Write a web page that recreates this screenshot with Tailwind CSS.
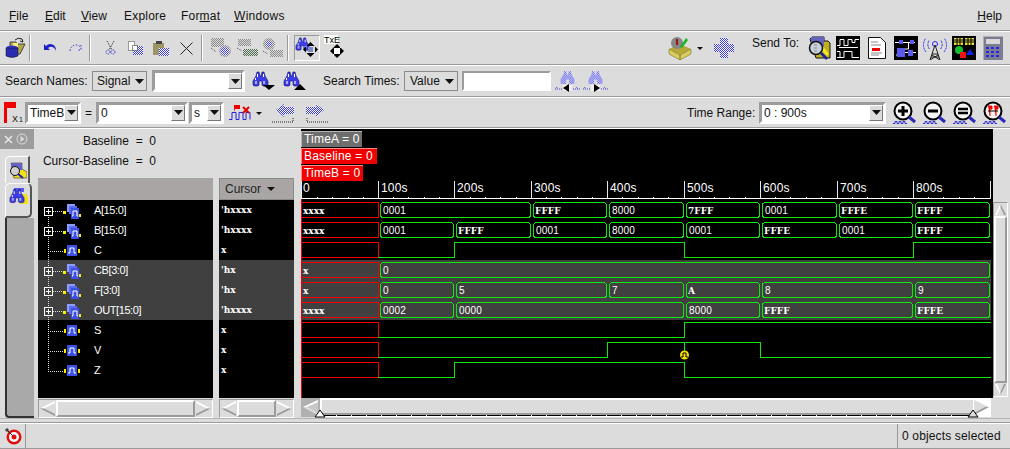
<!DOCTYPE html>
<html lang="en">
<head>
  <meta charset="UTF-8" />
  <title>Waveform Viewer</title>
  <script src="https://cdn.jsdelivr.net/npm/@tailwindcss/browser@4"></script>
</head>
<body class="bg-[#dcdcdc]">
  <!-- shared icon parts -->
  <svg class="absolute w-0 h-0">
    <defs>
      <pattern id="dblue" width="2" height="2" patternUnits="userSpaceOnUse"><rect width="2" height="2" fill="#fff"/><rect width="1" height="1" fill="#3c3ce0"/><rect x="1" y="1" width="1" height="1" fill="#3c3ce0"/></pattern>
      <pattern id="dgray" width="2" height="2" patternUnits="userSpaceOnUse"><rect width="1" height="1" fill="#8a8a8a"/><rect x="1" y="1" width="1" height="1" fill="#8a8a8a"/></pattern>
      <pattern id="dgreen" width="2" height="2" patternUnits="userSpaceOnUse"><rect width="1" height="1" fill="#4c6c4c"/><rect x="1" y="1" width="1" height="1" fill="#4c6c4c"/></pattern>
      <symbol id="binoc" viewBox="0 0 17 16">
        <path d="M5 1h2l1 4h1l1-4h2l1 4 3 5v4l-1 1h-4l-1-1v-4H7v4l-1 1H2l-1-1v-4l3-5z" fill="#3c3ce8" stroke="#101060" stroke-width=".6"/>
        <path d="M3 10h2v3H3zM11 10h2v3h-2z" fill="#a8a8ff"/>
        <path d="M5 3h1v3H5zM11 3h1v3h-1zM3 7h1v2H3z" fill="#fff"/>
      </symbol>
      <symbol id="binocd" viewBox="0 0 17 16">
        <path d="M5 1h2l1 4h1l1-4h2l1 4 3 5v4l-1 1h-4l-1-1v-4H7v4l-1 1H2l-1-1v-4l3-5z" fill="url(#dblue)"/>
      </symbol>
      <symbol id="sig" viewBox="0 0 16 12">
        <path d="M0 4h2v4H0zM14 4h2v4h-2z" fill="#ffee00"/>
        <rect x="3" y="0" width="10" height="11" fill="#3c50e8"/>
        <path d="M4 8h2V3h4v5h2" fill="none" stroke="#fff"/>
      </symbol>
      <symbol id="group" viewBox="0 0 19 15">
        <rect x="4" y="0" width="8" height="8" fill="#8c9cff"/>
        <rect x="6" y="2" width="8" height="8" fill="#5a6cf0"/>
        <path d="M0 7h3v3H0zM16 10h2v3h-2z" fill="#ffee00"/>
        <rect x="8" y="4" width="8" height="11" fill="#3c50e8"/>
        <path d="M9 12h1V7h4v5h1" fill="none" stroke="#fff"/>
      </symbol>
      <symbol id="lens" viewBox="0 0 24 24">
        <circle cx="10" cy="10" r="8.500" fill="#f4f4f4" stroke="#000" stroke-width="2"/>
        <path d="M16 16l6 5" stroke="#2a2ab8" stroke-width="3"/>
        <path d="M0 22.500h2v-2h2v2h2v-2h2v2h2v-2h2v2h2" fill="none" stroke="#3030e0"/>
      </symbol>
    </defs>
  </svg>

  <div class="w-[1010px] h-[449px] overflow-hidden flex flex-col bg-[#dcdcdc] text-[12px] leading-none text-[#111] font-['Liberation_Sans',sans-serif]">

    <!-- Menu bar -->
    <div class="h-[30px] shrink-0 flex items-center pt-px">
      <span class="ml-[9px] w-[36px]"><u>F</u>ile</span>
      <span class="w-[36px]"><u>E</u>dit</span>
      <span class="w-[43px]"><u>V</u>iew</span>
      <span class="w-[57px] tracking-[.2px]">Explore</span>
      <span class="w-[53px] tracking-[.2px]">For<u>m</u>at</span>
      <span class="tracking-[.3px]"><u>W</u>indows</span>
      <span class="ml-auto mr-[8px]"><u>H</u>elp</span>
    </div>
    <div class="h-px shrink-0 bg-[#9a9a9a]"></div><div class="h-px shrink-0 bg-white"></div>

    <!-- Main toolbar -->
    <div class="h-[32px] shrink-0 flex items-center">
      <svg class="ml-[5px] shrink-0" width="21" height="22" viewBox="0 0 21 22"><path d="M5 5h6l1 2h8l-5 10H5z" fill="#b4a848" stroke="#444"/><path d="M10 3q3-3 7-1l1 3-3-1" fill="none" stroke="#222"/><path d="M8 6h5v4H8z" fill="#f8f080"/><ellipse cx="7" cy="11" rx="6" ry="2.500" fill="#3434c8"/><path d="M1 11v8q6 3 12 0v-8z" fill="#2c2cb0" stroke="#111" stroke-width=".5"/></svg>
      <div class="ml-[3px] w-[2px] h-[26px] bg-[#9a9a9a] border-r border-white"></div>
      <svg class="ml-[12px] shrink-0" width="14" height="10" viewBox="0 0 14 10"><path d="M1 1v6h6L5 5q4-3 7 1l1 2q0-7-6-7-2 0-4 2L1 1z" fill="#2020c8"/></svg>
      <svg class="ml-[12px] shrink-0" width="14" height="10" viewBox="0 0 14 10"><path d="M1 8q1-6 6-6 3 0 5 3M12 2v5H8" fill="none" stroke="#3030d0" stroke-dasharray="1.500 1.500"/></svg>
      <div class="ml-[6px] w-[2px] h-[26px] bg-[#9a9a9a] border-r border-white"></div>
      <svg class="ml-[14px] shrink-0" width="11" height="14" viewBox="0 0 11 14"><path d="M2 0l5 9M9 0L4 9" stroke="#222" stroke-dasharray="1 1"/><circle cx="3" cy="11" r="2" fill="none" stroke="#2020c8" stroke-dasharray="1 1"/><circle cx="8" cy="11" r="2" fill="none" stroke="#2020c8" stroke-dasharray="1 1"/></svg>
      <svg class="ml-[12px] shrink-0" width="15" height="14" viewBox="0 0 15 14"><path d="M.5.500h6v9h-6z" fill="#fff" stroke="#444" stroke-dasharray="1 1"/><rect x="5" y="5" width="10" height="9" fill="url(#dblue)"/><path d="M4.500 4.500h5v5h-5z" fill="#fff" stroke="#222" stroke-dasharray="1 1"/></svg>
      <svg class="ml-[10px] shrink-0" width="16" height="15" viewBox="0 0 16 15"><rect x="0" y="2" width="11" height="12" fill="#b0a040"/><rect width="11" height="12" y="2" fill="url(#dgray)"/><rect x="3" width="6" height="3" fill="#444"/><rect x="6" y="7" width="10" height="8" fill="url(#dblue)"/></svg>
      <svg class="ml-[11px] shrink-0" width="13" height="13" viewBox="0 0 13 13"><path d="M.5.500l12 12M12.500.500l-12 12" stroke="#222"/></svg>
      <div class="ml-[8px] w-[2px] h-[26px] bg-[#9a9a9a] border-r border-white"></div>
      <svg class="ml-[7px] shrink-0" width="22" height="20" viewBox="0 0 22 20"><rect x="1" width="13" height="9" fill="url(#dgray)"/><path d="M1 10l5 4" stroke="#444" stroke-dasharray="1 1"/><circle cx="15" cy="13" r="6" fill="url(#dgray)"/><circle cx="15" cy="13" r="4" fill="url(#dblue)"/></svg>
      <svg class="ml-[5px] shrink-0" width="22" height="20" viewBox="0 0 22 20"><rect x="1" y="1" width="13" height="7" fill="url(#dgray)"/><path d="M0 10l5 3" stroke="#444" stroke-dasharray="1 1"/><rect x="6" y="11" width="15" height="7" fill="url(#dgreen)"/></svg>
      <svg class="ml-[3px] shrink-0" width="22" height="20" viewBox="0 0 22 20"><circle cx="7" cy="6" r="6" fill="url(#dgray)"/><circle cx="7" cy="6" r="3" fill="url(#dblue)"/><path d="M1 13l5 3" stroke="#444" stroke-dasharray="1 1"/><rect x="8" y="12" width="13" height="7" fill="url(#dgray)"/></svg>
      <div class="ml-[3px] w-[2px] h-[26px] bg-[#9a9a9a] border-r border-white"></div>
      <div class="ml-[5px] w-[26px] h-[26px] shrink-0 border border-[#9a9a9a] border-r-white border-b-white flex items-center justify-center">
        <svg width="24" height="22" viewBox="0 0 24 22"><use href="#binoc" x="0" y="0" width="15" height="14"/><rect x="13" y="10" width="5" height="5" fill="#8088c0"/><path d="M15.500 5l4 4h-8zM15.500 20l4-4h-8zM8 12.500l3-3v6zM23 12.500l-3-3v6z" fill="#000"/></svg>
      </div>
      <svg class="ml-[4px] shrink-0" width="24" height="26" viewBox="0 0 24 26"><rect width="14" height="9" fill="#fff"/><text x="0" y="8" class="text-[9px] font-['Liberation_Sans',sans-serif]" fill="#000">TxE</text><circle cx="13" cy="16" r="5" fill="#fff"/><path d="M13 9l4 4H9zM13 23l4-4H9zM6 16l4-4v8zM20 16l-4-4v8z" fill="#000"/></svg>
      <svg class="ml-[320px] shrink-0" width="24" height="24" viewBox="0 0 24 24"><path d="M1 13l11-5 11 5-11 6z" fill="#b8a838"/><path d="M1 13v5l11 6v-5zM23 13v5l-11 6v-5z" fill="#d8cc5c" stroke="#6a6020" stroke-width=".5"/><circle cx="9" cy="7" r="6" fill="#888"/><path d="M9 3v6" stroke="#a01010" stroke-width="2"/><path d="M12 11l6-9 2 2-6 8z" fill="#18b818"/></svg>
      <svg class="ml-[5px] shrink-0" width="6" height="3" viewBox="0 0 6 3"><path d="M0 0h6L3 3z" fill="#111"/></svg>
      <svg class="ml-[11px] shrink-0" width="20" height="20" viewBox="0 0 20 20"><path d="M6 0h8v6h6v8h-6v6H6v-6H0V6h6z" fill="url(#dblue)"/></svg>
      <span class="ml-[18px] w-[50px] self-start mt-[5px] whitespace-nowrap">Send To:</span>
      <svg class="ml-[5px] shrink-0" width="24" height="24" viewBox="0 0 24 24"><path d="M3 3l2-2h12v4h4l2 2v15H9z" fill="#c0b020" stroke="#111"/><rect x="4" y="1" width="13" height="10" fill="#6464c0"/><path d="M12 12l8 8 2-2-7-9z" fill="#f0e820"/><circle cx="9" cy="12" r="6.500" fill="#c8d0d8" stroke="#111" stroke-width="1.500"/><path d="M7 9h3M7 12h3M7 15h3" stroke="#889"/><path d="M14 17l6 6" stroke="#2020a0" stroke-width="2.500"/></svg>
      <svg class="ml-[5px] shrink-0" width="24" height="24" viewBox="0 0 24 24"><rect width="24" height="24" fill="#000"/><path d="M1 9.500h3v-6h4v6h4v-6h4v3h3v-3h4M3 11.500h19M1 21.500h7v-6h8v6h7M1 15.500h3v6" fill="none" stroke="#fff"/></svg>
      <svg class="ml-[8px] shrink-0" width="18" height="24" viewBox="0 0 18 24"><path d="M.5 1.500h12l5 5v16H.5z" fill="#fff" stroke="#111"/><path d="M3 6h7M3 9h10M3 17h11M3 19h8" stroke="#888"/><rect x="4" y="12" width="8" height="3" fill="#f00000"/></svg>
      <svg class="ml-[8px] shrink-0" width="24" height="24" viewBox="0 0 24 24"><rect width="24" height="24" fill="#000"/><path d="M1 6.500h20M14.500 6v7h-4M6 16.500h16M2 19h2" stroke="#fff" fill="none"/><rect x="5" y="4" width="4" height="4" fill="#5a5af0"/><rect x="16" y="4" width="4" height="4" fill="#5a5af0"/><rect x="3" y="12" width="8" height="9" fill="#5a5af0"/><rect x="14" y="14" width="5" height="6" fill="#5a5af0"/></svg>
      <svg class="ml-[5px] shrink-0" width="24" height="24" viewBox="0 0 24 24"><path d="M3 16a11 11 0 0 1 0-14M21 16a11 11 0 0 0 0-14M6.500 13a7 7 0 0 1 0-9M17.500 13a7 7 0 0 0 0-9" fill="none" stroke="#2424f0" stroke-dasharray="2 1"/><circle cx="12" cy="8" r="2.500" fill="none" stroke="#2424f0"/><path d="M12 9L7 24M12 9l5 15M9 18h6M8 21h8M7 24l8-5M17 24l-8-5" stroke="#222" fill="none"/></svg>
      <svg class="ml-[5px] shrink-0" width="24" height="24" viewBox="0 0 24 24"><rect width="24" height="24" fill="#000"/><rect x="2" y="2" width="9" height="7" fill="#e8e040"/><rect x="13" y="2" width="9" height="7" fill="#e8e040"/><path d="M2 4h20M2 6h20M5 2v7M8 2v7M16 2v7M19 2v7" stroke="#000"/><circle cx="7" cy="14" r="4" fill="#10c030"/><rect x="8" y="16" width="6" height="6" fill="#f01010"/><path d="M18 13l4 6h-8z" fill="#1020f0"/></svg>
      <svg class="ml-[7px] shrink-0" width="20" height="24" viewBox="0 0 20 24"><rect width="20" height="24" rx="1" fill="#7c7c90"/><path d="M0 0h20v1H1v23H0z" fill="#b0b0b8"/><rect x="3" y="3" width="14" height="5" fill="#d8d8d8"/><path d="M3 11h3v2H3zM8 11h3v2H8zM13 11h3v2h-3zM3 15h3v2H3zM8 15h3v2H8zM13 15h3v2h-3zM3 19h3v2H3zM8 19h3v2H8zM13 19h3v2h-3z" fill="#2828e8"/></svg>
    </div>
    <div class="h-px shrink-0 bg-[#9a9a9a]"></div><div class="h-px shrink-0 bg-white"></div>

    <!-- Search toolbar -->
    <div class="h-[30px] shrink-0 flex items-center">
      <span class="ml-[5px] w-[83px] whitespace-nowrap">Search Names:</span>
      <div class="ml-[4px] w-[55px] h-[20px] shrink-0 border border-[#8a8a8a] flex items-center pl-[4px] gap-[5px]">Signal<svg width="9" height="5"><path d="M0 0h9L4.500 5z" fill="#111"/></svg></div>
      <div class="ml-[5px] w-[93px] h-[22px] shrink-0 flex border-[3px] border-[#9c9c9c] border-r-white border-b-white">
        <div class="flex-1 bg-white"></div>
        <div class="w-[14px] flex items-center justify-center border border-white border-r-[#777] border-b-[#777]"><svg width="9" height="5"><path d="M0 0h9L4.500 5z" fill="#111"/></svg></div>
      </div>
      <svg class="ml-[7px] shrink-0" width="23" height="20" viewBox="0 0 23 20"><use href="#binoc" width="17" height="16"/><path d="M11 14h12l-6 5z" fill="#000"/></svg>
      <svg class="ml-[8px] shrink-0" width="23" height="20" viewBox="0 0 23 20"><use href="#binoc" width="17" height="16"/><path d="M11 19h12l-6-6z" fill="#000"/></svg>
      <span class="ml-[17px] w-[78px] whitespace-nowrap">Search Times:</span>
      <div class="ml-[3px] w-[54px] h-[20px] shrink-0 border border-[#8a8a8a] flex items-center pl-[5px] gap-[5px]">Value<svg width="9" height="5"><path d="M0 0h9L4.500 5z" fill="#111"/></svg></div>
      <div class="ml-[4px] w-[89px] h-[20px] shrink-0 bg-white border-[2px] border-[#9c9c9c] border-r-white border-b-white"></div>
      <svg class="ml-[4px] shrink-0" width="25" height="22" viewBox="0 0 25 22"><use href="#binocd" x="4" width="17" height="15"/><path d="M0 19h7M18 19h7M2 17l-1 2M21 17l2 2" stroke="#3c3ce0" stroke-dasharray="1 1"/><path d="M8 15h9v6H8z" fill="#eee"/><path d="M14 14v8l-6-4z" fill="#000"/></svg>
      <svg class="ml-[3px] shrink-0" width="25" height="22" viewBox="0 0 25 22"><use href="#binocd" x="4" width="17" height="15"/><path d="M0 19h7M18 19h7M2 17l-1 2M21 17l2 2" stroke="#3c3ce0" stroke-dasharray="1 1"/><path d="M8 15h9v6H8z" fill="#eee"/><path d="M11 14v8l6-4z" fill="#000"/></svg>
    </div>
    <div class="h-px shrink-0 bg-[#9a9a9a]"></div><div class="h-px shrink-0 bg-white"></div>

    <!-- Time toolbar -->
    <div class="h-[29px] shrink-0 flex items-center">
      <svg class="ml-[4px] shrink-0" width="20" height="21" viewBox="0 0 20 21"><path d="M0 0h12v6H3v15H0z" fill="#f00000"/><text x="8" y="20" class="text-[9px] font-['Liberation_Sans',sans-serif]" fill="#111">X</text><text x="15" y="20" class="text-[7px] font-['Liberation_Sans',sans-serif]" fill="#111">1</text></svg>
      <div class="ml-px w-[56px] h-[22px] shrink-0 flex border-[3px] border-[#9c9c9c] border-r-white border-b-white">
        <div class="flex-1 bg-white flex items-center pl-[2px]">TimeB</div>
        <div class="w-[14px] flex items-center justify-center border border-white border-r-[#777] border-b-[#777]"><svg width="9" height="5"><path d="M0 0h9L4.500 5z" fill="#111"/></svg></div>
      </div>
      <span class="ml-[4px] w-[6px]">=</span>
      <div class="ml-[5px] w-[92px] h-[22px] shrink-0 flex border-[3px] border-[#9c9c9c] border-r-white border-b-white">
        <div class="flex-1 bg-white flex items-center pl-[2px]">0</div>
        <div class="w-[14px] flex items-center justify-center border border-white border-r-[#777] border-b-[#777]"><svg width="9" height="5"><path d="M0 0h9L4.500 5z" fill="#111"/></svg></div>
      </div>
      <div class="ml-px w-[35px] h-[22px] shrink-0 flex border-[3px] border-[#9c9c9c] border-r-white border-b-white">
        <div class="flex-1 bg-white flex items-center pl-[2px]">s</div>
        <div class="w-[14px] flex items-center justify-center border border-white border-r-[#777] border-b-[#777]"><svg width="9" height="5"><path d="M0 0h9L4.500 5z" fill="#111"/></svg></div>
      </div>
      <svg class="ml-[5px] shrink-0" width="33" height="18" viewBox="0 0 33 18"><path d="M0 15.500h3v-7h4v7h3v-7h4v7h3v-7h4v7" fill="none" stroke="#2020e0"/><path d="M5 8V1h6v4H6" fill="#f00000"/><path d="M14 3l6 6M20 3l-6 6" stroke="#e00000" stroke-width="2"/><path d="M27 8h6l-3 3z" fill="#111"/></svg>
      <svg class="ml-[10px] shrink-0" width="24" height="20" viewBox="0 0 24 20"><path d="M4 7l8-6v3h10v7H12v3z" fill="url(#dblue)"/><path d="M0 19h21V14" fill="none" stroke="#222" stroke-dasharray="1 1"/></svg>
      <svg class="ml-[8px] shrink-0" width="24" height="20" viewBox="0 0 24 20"><path d="M20 7l-8-6v3H2v7h10v3z" fill="url(#dblue)"/><path d="M24 19H3V14" fill="none" stroke="#222" stroke-dasharray="1 1"/></svg>
      <span class="ml-[359px] w-[68px] whitespace-nowrap">Time Range:</span>
      <div class="ml-[4px] w-[127px] h-[22px] shrink-0 flex border-[3px] border-[#9c9c9c] border-r-white border-b-white">
        <div class="flex-1 bg-white flex items-center pl-[2px] whitespace-pre">0 : 900s</div>
        <div class="w-[14px] flex items-center justify-center border border-white border-r-[#777] border-b-[#777]"><svg width="9" height="5"><path d="M0 0h9L4.500 5z" fill="#111"/></svg></div>
      </div>
      <svg class="ml-[7px] shrink-0" width="24" height="24"><use href="#lens" width="24" height="24"/><path d="M5 10h10M10 5v10" stroke="#000" stroke-width="3"/></svg>
      <svg class="ml-[6px] shrink-0" width="24" height="24"><use href="#lens" width="24" height="24"/><path d="M5 10h10" stroke="#000" stroke-width="3"/></svg>
      <svg class="ml-[6px] shrink-0" width="24" height="24"><use href="#lens" width="24" height="24"/><path d="M5 8h10M5 12h10" stroke="#000" stroke-width="2.500"/></svg>
      <svg class="ml-[6px] shrink-0" width="24" height="24"><use href="#lens" width="24" height="24"/><path d="M5 5h4v3H7v7M11 5h4v3h-2v7" fill="#f00000" stroke="#f00000"/><path d="M5 10h10" stroke="#000"/></svg>
    </div>
    <div class="h-px shrink-0 bg-[#9a9a9a]"></div><div class="h-px shrink-0 bg-white"></div>

    <!-- Work area -->
    <div class="h-[289px] shrink-0 flex">

      <!-- Tab strip -->
      <div class="w-[34px] shrink-0 flex flex-col">
        <div class="h-[20px] shrink-0 bg-[#9c9c9c] flex items-center pl-[4px] gap-[3px]">
          <svg width="9" height="9"><path d="M1 1l7 7M8 1L1 8" stroke="#e8e8e8" stroke-width="1.500"/></svg>
          <svg width="12" height="12"><circle cx="6" cy="6" r="5" fill="none" stroke="#dcdcdc"/><path d="M4.500 3l4 3-4 3z" fill="#dcdcdc"/></svg>
        </div>
        <div class="h-[7px] shrink-0"></div>
        <div class="ml-[5px] w-[25px] h-[27px] shrink-0 rounded-tl-[5px] border-l border-t border-white bg-[#dcdcdc] border-r-2 border-r-[#555] flex items-center justify-center">
          <svg width="19" height="17" viewBox="0 0 19 17"><path d="M3 1h11v6l5 3v6H6z" fill="#f0e020" stroke="#111" stroke-width=".5"/><rect x="3" y="1" width="11" height="7" fill="#6464c0"/><circle cx="7" cy="9" r="4.500" fill="#d0d0d0" stroke="#111"/><path d="M10 12l5 4" stroke="#2020a0" stroke-width="2"/></svg>
        </div>
        <div class="ml-[5px] w-[27px] h-[35px] shrink-0 rounded-t-[5px] rounded-br-[5px] border-l border-t border-white bg-[#dcdcdc] border-r-2 border-r-[#555] border-b-2 border-b-[#555] flex pt-[4px] justify-center">
          <svg width="19" height="17" viewBox="0 0 19 17"><path d="M13 6h5l1 4v6h-8z" fill="#f0e020"/><rect x="5" width="10" height="4" fill="#5a5af0"/><use href="#binoc" width="16" height="16"/></svg>
        </div>
        <div class="flex-1 ml-[5px] border-l-2 border-[#333] border-b-2 rounded-bl-[4px] bg-[#a9a9a9]"></div>
      </div>

      <!-- Signal names and cursor values -->
      <div class="w-[267px] shrink-0 flex flex-col">
        <div class="h-[49px] shrink-0 w-[122px] flex flex-col items-end pt-[6px] gap-[8px]">
          <span class="h-[12px] whitespace-pre">Baseline  =  0</span>
          <span class="h-[12px] whitespace-pre">Cursor-Baseline  =  0</span>
        </div>
        <div class="flex-1 flex">
          <div class="ml-[4px] w-[175px] shrink-0 flex flex-col">
            <div class="h-[22px] bg-[#a9a5a5]"></div>
            <div class="h-[198px] bg-black text-white text-[11px] tracking-[-.4px]">
              <div class="h-[20px] flex items-center pt-px"><svg class="shrink-0" width="56" height="20"><path d="M10.500 10v10M15 10.500h10" stroke="#ddd" stroke-dasharray="1 1"/><rect x="6.500" y="6.500" width="8" height="8" fill="#000" stroke="#fff"/><path d="M8 10.500h5M10.500 8v5" stroke="#fff"/><use href="#group" x="25" y="3" width="19" height="15"/></svg>A[15:0]</div>
              <div class="h-[20px] flex items-center pt-px"><svg class="shrink-0" width="56" height="20"><path d="M10.500 0v20M15 10.500h10" stroke="#ddd" stroke-dasharray="1 1"/><rect x="6.500" y="6.500" width="8" height="8" fill="#000" stroke="#fff"/><path d="M8 10.500h5M10.500 8v5" stroke="#fff"/><use href="#group" x="25" y="3" width="19" height="15"/></svg>B[15:0]</div>
              <div class="h-[20px] flex items-center pt-px"><svg class="shrink-0" width="56" height="20"><path d="M10.500 0v20M10 10.500h16" stroke="#ddd" stroke-dasharray="1 1"/><use href="#sig" x="26" y="4" width="16" height="12"/></svg>C</div>
              <div class="h-[20px] flex items-center pt-px bg-[#404040]"><svg class="shrink-0" width="56" height="20"><path d="M10.500 0v20M15 10.500h10" stroke="#ddd" stroke-dasharray="1 1"/><rect x="6.500" y="6.500" width="8" height="8" fill="#404040" stroke="#fff"/><path d="M8 10.500h5M10.500 8v5" stroke="#fff"/><use href="#group" x="25" y="3" width="19" height="15"/></svg>CB[3:0]</div>
              <div class="h-[20px] flex items-center pt-px bg-[#404040]"><svg class="shrink-0" width="56" height="20"><path d="M10.500 0v20M15 10.500h10" stroke="#ddd" stroke-dasharray="1 1"/><rect x="6.500" y="6.500" width="8" height="8" fill="#404040" stroke="#fff"/><path d="M8 10.500h5M10.500 8v5" stroke="#fff"/><use href="#group" x="25" y="3" width="19" height="15"/></svg>F[3:0]</div>
              <div class="h-[20px] flex items-center pt-px bg-[#404040]"><svg class="shrink-0" width="56" height="20"><path d="M10.500 0v20M15 10.500h10" stroke="#ddd" stroke-dasharray="1 1"/><rect x="6.500" y="6.500" width="8" height="8" fill="#404040" stroke="#fff"/><path d="M8 10.500h5M10.500 8v5" stroke="#fff"/><use href="#group" x="25" y="3" width="19" height="15"/></svg>OUT[15:0]</div>
              <div class="h-[20px] flex items-center pt-px"><svg class="shrink-0" width="56" height="20"><path d="M10.500 0v20M10 10.500h16" stroke="#ddd" stroke-dasharray="1 1"/><use href="#sig" x="26" y="4" width="16" height="12"/></svg>S</div>
              <div class="h-[20px] flex items-center pt-px"><svg class="shrink-0" width="56" height="20"><path d="M10.500 0v20M10 10.500h16" stroke="#ddd" stroke-dasharray="1 1"/><use href="#sig" x="26" y="4" width="16" height="12"/></svg>V</div>
              <div class="h-[20px] flex items-center pt-px"><svg class="shrink-0" width="56" height="20"><path d="M10.500 0v10.500M10 10.500h16" stroke="#ddd" stroke-dasharray="1 1"/><use href="#sig" x="26" y="4" width="16" height="12"/></svg>Z</div>
            </div>
            <div class="h-[19px] flex border border-[#9a9a9a] border-r-white border-b-white mt-px">
              <svg class="shrink-0" width="17" height="17" viewBox="0 0 17 17"><path d="M1 8.500L16 1v15z" fill="#dcdcdc"/><path d="M1 8.500L16 1v2L5 8.500z" fill="#fff"/><path d="M1 8.500L16 16v-2L5 8.500z" fill="#9a9a9a"/></svg>
              <div class="flex-1 border-2 border-t-white border-l-white border-r-[#9a9a9a] border-b-[#9a9a9a]"></div>
              <svg class="shrink-0" width="17" height="17" viewBox="0 0 17 17"><path d="M16 8.500L1 1v15z" fill="#dcdcdc"/><path d="M16 8.500L1 1v2l11 5.500z" fill="#fff"/><path d="M16 8.500L1 16v-2l11-5.500z" fill="#9a9a9a"/></svg>
            </div>
          </div>
          <div class="ml-[6px] w-[75px] shrink-0 flex flex-col">
            <div class="h-[22px] bg-[#a9a5a5] border border-[#8a8a8a] flex items-center pl-[5px] gap-[6px] text-[#222]">Cursor<svg width="8" height="4"><path d="M0 0h8L4 4z" fill="#111"/></svg></div>
            <div class="h-[198px] bg-black text-white font-['DejaVu_Serif',serif] font-bold text-[9px]">
              <div class="h-[20px] flex items-center pl-[2px]">'hxxxx</div>
              <div class="h-[20px] flex items-center pl-[2px]">'hxxxx</div>
              <div class="h-[20px] flex items-center pl-[2px]">x</div>
              <div class="h-[20px] flex items-center pl-[2px] bg-[#404040]">'hx</div>
              <div class="h-[20px] flex items-center pl-[2px] bg-[#404040]">'hx</div>
              <div class="h-[20px] flex items-center pl-[2px] bg-[#404040]">'hxxxx</div>
              <div class="h-[20px] flex items-center pl-[2px]">x</div>
              <div class="h-[20px] flex items-center pl-[2px]">x</div>
              <div class="h-[20px] flex items-center pl-[2px]">x</div>
            </div>
            <div class="h-[19px] flex border border-[#9a9a9a] border-r-white border-b-white mt-px">
              <svg class="shrink-0" width="17" height="17" viewBox="0 0 17 17"><path d="M1 8.500L16 1v15z" fill="#dcdcdc"/><path d="M1 8.500L16 1v2L5 8.500z" fill="#fff"/><path d="M1 8.500L16 16v-2L5 8.500z" fill="#9a9a9a"/></svg>
              <div class="flex-1 border-2 border-t-white border-l-white border-r-[#9a9a9a] border-b-[#9a9a9a]"></div>
              <svg class="shrink-0" width="17" height="17" viewBox="0 0 17 17"><path d="M16 8.500L1 1v15z" fill="#dcdcdc"/><path d="M16 8.500L1 1v2l11 5.500z" fill="#fff"/><path d="M16 8.500L1 16v-2l11-5.500z" fill="#9a9a9a"/></svg>
            </div>
          </div>
        </div>
      </div>

      <!-- Waveforms -->
      <div class="w-[692px] shrink-0 flex flex-col">
        <svg class="block shrink-0 bg-black" width="692" height="269" viewBox="301 129 692 269" shape-rendering="crispEdges">
          <!-- grey bands -->
          <rect x="301" y="260" width="690" height="60" fill="#404040"/>
          <!-- time flags -->
          <rect x="301" y="131" width="61" height="16" fill="#6e6e6e"/><path d="M301.500 147V131.500H362" stroke="#b4b4b4" fill="none"/>
          <rect x="301" y="148" width="76" height="16" fill="#f00000"/><path d="M301.500 164V148.500H377" stroke="#ff8888" fill="none"/>
          <rect x="301" y="165" width="62" height="16" fill="#f00000"/><path d="M301.500 181V165.500H363" stroke="#ff8888" fill="none"/>
          <g fill="#fff" class="text-[12px] tracking-[.2px] font-['Liberation_Sans',sans-serif]" shape-rendering="auto">
            <text x="304" y="143">TimeA = 0</text>
            <text x="304" y="160">Baseline = 0</text>
            <text x="304" y="177">TimeB = 0</text>
            <!-- ruler labels -->
            <text x="303" y="192">0</text>
            <text x="381" y="192">100s</text>
            <text x="457" y="192">200s</text>
            <text x="534" y="192">300s</text>
            <text x="610" y="192">400s</text>
            <text x="687" y="192">500s</text>
            <text x="763" y="192">600s</text>
            <text x="840" y="192">700s</text>
            <text x="916" y="192">800s</text>
          </g>
          <!-- ruler -->
          <path d="M301 198.500H991" stroke="#fff"/>
          <path d="M301.500 181V199M378.500 181V199M454.500 181V199M531.500 181V199M607.500 181V199M684.500 181V199M760.500 181V199M837.500 181V199M913.500 181V199M990.500 181V199" stroke="#e8e8e8"/>
          <path d="M317.500 196.500V198M332.500 196.500V198M348.500 196.500V198M363.500 196.500V198M393.500 196.500V198M408.500 196.500V198M424.500 196.500V198M439.500 196.500V198M470.500 196.500V198M485.500 196.500V198M500.500 196.500V198M516.500 196.500V198M546.500 196.500V198M561.500 196.500V198M577.500 196.500V198M592.500 196.500V198M622.500 196.500V198M638.500 196.500V198M653.500 196.500V198M668.500 196.500V198M699.500 196.500V198M714.500 196.500V198M729.500 196.500V198M745.500 196.500V198M775.500 196.500V198M790.500 196.500V198M806.500 196.500V198M821.500 196.500V198M852.500 196.500V198M867.500 196.500V198M882.500 196.500V198M898.500 196.500V198M928.500 196.500V198M943.500 196.500V198M959.500 196.500V198M974.500 196.500V198" stroke="#fff" stroke-width="1"/>
          <!-- red undefined part -->
          <path d="M301.500 199V398" stroke="#f00000"/>
          <g fill="none" stroke="#f00000">
            <rect x="301.500" y="202.500" width="77" height="15"/>
            <rect x="301.500" y="222.500" width="77" height="15"/>
            <rect x="301.500" y="242.500" width="77" height="15"/>
            <rect x="301.500" y="262.500" width="77" height="15"/>
            <rect x="301.500" y="282.500" width="77" height="15"/>
            <rect x="301.500" y="302.500" width="77" height="15"/>
            <rect x="301.500" y="322.500" width="77" height="15"/>
            <rect x="301.500" y="342.500" width="77" height="15"/>
            <rect x="301.500" y="362.500" width="77" height="15"/>
          </g>
          <!-- bus values -->
          <g fill="none" stroke="#10e810">
            <rect x="380.500" y="202.500" width="150" height="15" rx="3"/>
            <rect x="533.500" y="202.500" width="73" height="15" rx="3"/>
            <rect x="609.500" y="202.500" width="74" height="15" rx="3"/>
            <rect x="686.500" y="202.500" width="73" height="15" rx="3"/>
            <rect x="762.500" y="202.500" width="74" height="15" rx="3"/>
            <rect x="839.500" y="202.500" width="73" height="15" rx="3"/>
            <rect x="915.500" y="202.500" width="74" height="15" rx="3"/>

            <rect x="380.500" y="222.500" width="73" height="15" rx="3"/>
            <rect x="456.500" y="222.500" width="74" height="15" rx="3"/>
            <rect x="533.500" y="222.500" width="73" height="15" rx="3"/>
            <rect x="609.500" y="222.500" width="74" height="15" rx="3"/>
            <rect x="686.500" y="222.500" width="73" height="15" rx="3"/>
            <rect x="762.500" y="222.500" width="74" height="15" rx="3"/>
            <rect x="839.500" y="222.500" width="73" height="15" rx="3"/>
            <rect x="915.500" y="222.500" width="74" height="15" rx="3"/>

            <rect x="380.500" y="262.500" width="609" height="15" rx="3"/>

            <rect x="380.500" y="282.500" width="73" height="15" rx="3"/>
            <rect x="456.500" y="282.500" width="150" height="15" rx="3"/>
            <rect x="609.500" y="282.500" width="74" height="15" rx="3"/>
            <rect x="686.500" y="282.500" width="73" height="15" rx="3"/>
            <rect x="762.500" y="282.500" width="150" height="15" rx="3"/>
            <rect x="915.500" y="282.500" width="74" height="15" rx="3"/>

            <rect x="380.500" y="302.500" width="73" height="15" rx="3"/>
            <rect x="456.500" y="302.500" width="227" height="15" rx="3"/>
            <rect x="686.500" y="302.500" width="73" height="15" rx="3"/>
            <rect x="762.500" y="302.500" width="150" height="15" rx="3"/>
            <rect x="915.500" y="302.500" width="74" height="15" rx="3"/>

            <!-- single bit signals -->
            <path d="M378 257.500H454.500V242.500H684.500V257.500H913.500V242.500H991"/>
            <path d="M378 337.500H684.500V322.500H991"/>
            <path d="M378 357.500H607.500V342.500H760.500V357.500H991"/>
            <path d="M378 377.500H454.500V362.500H684.500V377.500H991"/>
            <path d="M684.500 342V352"/>
          </g>
          <!-- value labels -->
          <g fill="#fff" class="text-[10px] tracking-[.2px] font-['Liberation_Sans',sans-serif]" shape-rendering="auto">
            <text x="383" y="214">0001</text>
            <text x="383" y="234">0001</text>
            <text x="536" y="234">0001</text>
            <text x="689" y="234">0001</text>
            <text x="842" y="234">0001</text>
            <text x="765" y="214">0001</text>
            <text x="383" y="274">0</text>
            <text x="383" y="294">0</text>
            <text x="459" y="294">5</text>
            <text x="612" y="294">7</text>
            <text x="765" y="294">8</text>
            <text x="918" y="294">9</text>
            <text x="383" y="314">0002</text>
            <text x="459" y="314">0000</text>
            <text x="689" y="314">8000</text>
            <text x="612" y="234">8000</text>
            <text x="612" y="214">8000</text>
          </g>
          <g fill="#fff" class="text-[9px] font-bold font-['DejaVu_Serif',serif]" shape-rendering="auto">
            <text x="303" y="214">xxxx</text>
            <text x="303" y="234">xxxx</text>
            <text x="303" y="274">x</text>
            <text x="303" y="294">x</text>
            <text x="303" y="314">xxxx</text>
            <text x="535" y="214">FFFF</text>
            <text x="688" y="214">7FFF</text>
            <text x="841" y="214">FFFE</text>
            <text x="917" y="214">FFFF</text>
            <text x="458" y="234">FFFF</text>
            <text x="764" y="234">FFFE</text>
            <text x="917" y="234">FFFF</text>
            <text x="688" y="294">A</text>
            <text x="764" y="314">FFFF</text>
            <text x="917" y="314">FFFE</text>
          </g>
          <!-- cursor marker -->
          <g shape-rendering="auto">
            <circle cx="684.500" cy="355" r="4.500" fill="#f8e000"/>
            <path d="M681 357h2v-4h3v4h2" fill="none" stroke="#000"/>
          </g>
        </svg>
        <div class="relative h-[20px] shrink-0 flex">
          <svg class="shrink-0" width="19" height="20" viewBox="0 0 19 20"><rect width="19" height="19" fill="#b0b0b0"/><path d="M2 9l15-7v15z" fill="#c8c8c8"/><path d="M2 9l15-7v2L6 9z" fill="#fff"/><path d="M2 9l15 8v-2L6 9z" fill="#dcdcdc"/></svg>
          <div class="w-[653px] h-[17px] border-t-2 border-t-white border-l-2 border-l-white border-b-2 border-b-[#9a9a9a] bg-[#dcdcdc]"></div>
          <svg class="shrink-0" width="18" height="20" viewBox="0 0 18 20"><rect width="18" height="19" fill="#fff"/><path d="M16 9L1 2v15z" fill="#dcdcdc"/><path d="M16 9L1 17v-2l11-6z" fill="#9a9a9a"/></svg>
          <!-- time range handles -->
          <svg class="absolute left-0 top-0" width="692" height="20" viewBox="0 0 692 20" shape-rendering="crispEdges">
            <path d="M19 17.500H672" stroke="#000"/>
            <path d="M19 18.500H672" stroke="#fff"/>
            <path d="M35.500 17V18M50.500 17V18M65.500 17V18M80.500 17V18M95.500 17V18M110.500 17V18M125.500 17V18M140.500 17V18M155.500 17V18M170.500 17V18M185.500 17V18M200.500 17V18M215.500 17V18M230.500 17V18M245.500 17V18M260.500 17V18M275.500 17V18M290.500 17V18M305.500 17V18M320.500 17V18M335.500 17V18M350.500 17V18M365.500 17V18M380.500 17V18M395.500 17V18M410.500 17V18M425.500 17V18M440.500 17V18M455.500 17V18M470.500 17V18M485.500 17V18M500.500 17V18M515.500 17V18M530.500 17V18M545.500 17V18M560.500 17V18M575.500 17V18M590.500 17V18M605.500 17V18M620.500 17V18M635.500 17V18M650.500 17V18" stroke="#fff"/>
            <path d="M14 19l5-7 5 7z" fill="#fff" stroke="#000" shape-rendering="auto"/>
            <path d="M667 19l5-7 5 7z" fill="#dcdcdc" stroke="#000" shape-rendering="auto"/>
          </svg>
        </div>
      </div>

      <!-- Vertical scrollbar -->
      <div class="w-[15px] shrink-0 flex flex-col pt-[73px] pb-[21px]">
        <div class="flex-1 flex flex-col border border-[#9a9a9a] border-r-white border-b-white">
          <svg class="shrink-0" width="13" height="13" viewBox="0 0 13 13"><path d="M6.500 1L12 12H1z" fill="#dcdcdc"/><path d="M6.500 1L1 12h2l3.500-8z" fill="#fff"/><path d="M6.500 1L12 12h-2L6.500 4z" fill="#9a9a9a"/></svg>
          <div class="flex-1 border-2 border-t-white border-l-white border-r-[#9a9a9a] border-b-[#9a9a9a]"></div>
          <svg class="shrink-0" width="13" height="13" viewBox="0 0 13 13"><path d="M6.500 12L12 1H1z" fill="#dcdcdc"/><path d="M6.500 12L1 1h2l3.500 8z" fill="#fff"/><path d="M6.500 12L12 1h-2L6.500 9z" fill="#9a9a9a"/></svg>
        </div>
      </div>
    </div>

    <!-- Status bar -->
    <div class="h-px shrink-0 bg-[#b4b4b4]"></div>
    <div class="h-[3px] shrink-0"></div>
    <div class="h-px shrink-0 bg-[#9a9a9a]"></div><div class="h-px shrink-0 bg-white"></div>
    <div class="h-[24px] shrink-0 flex">
      <div class="w-[26px] shrink-0 flex items-center justify-center border-r border-[#9a9a9a]">
        <svg width="18" height="18" viewBox="0 0 18 18"><circle cx="10" cy="10" r="7.500" fill="#e01010"/><circle cx="10" cy="10" r="5" fill="#fff"/><circle cx="10" cy="10" r="2.500" fill="#e01010"/><path d="M3 3l6 6M1 3h4M3 1v4" stroke="#222"/></svg>
      </div>
      <div class="flex-1"></div>
      <div class="w-[113px] shrink-0 border-l border-[#9a9a9a] flex items-center pl-[4px] whitespace-nowrap tracking-[.15px]">0 objects selected</div>
    </div>
    <div class="h-px shrink-0 bg-[#9a9a9a]"></div><div class="h-px shrink-0 bg-white"></div>
  </div>
</body>
</html>
